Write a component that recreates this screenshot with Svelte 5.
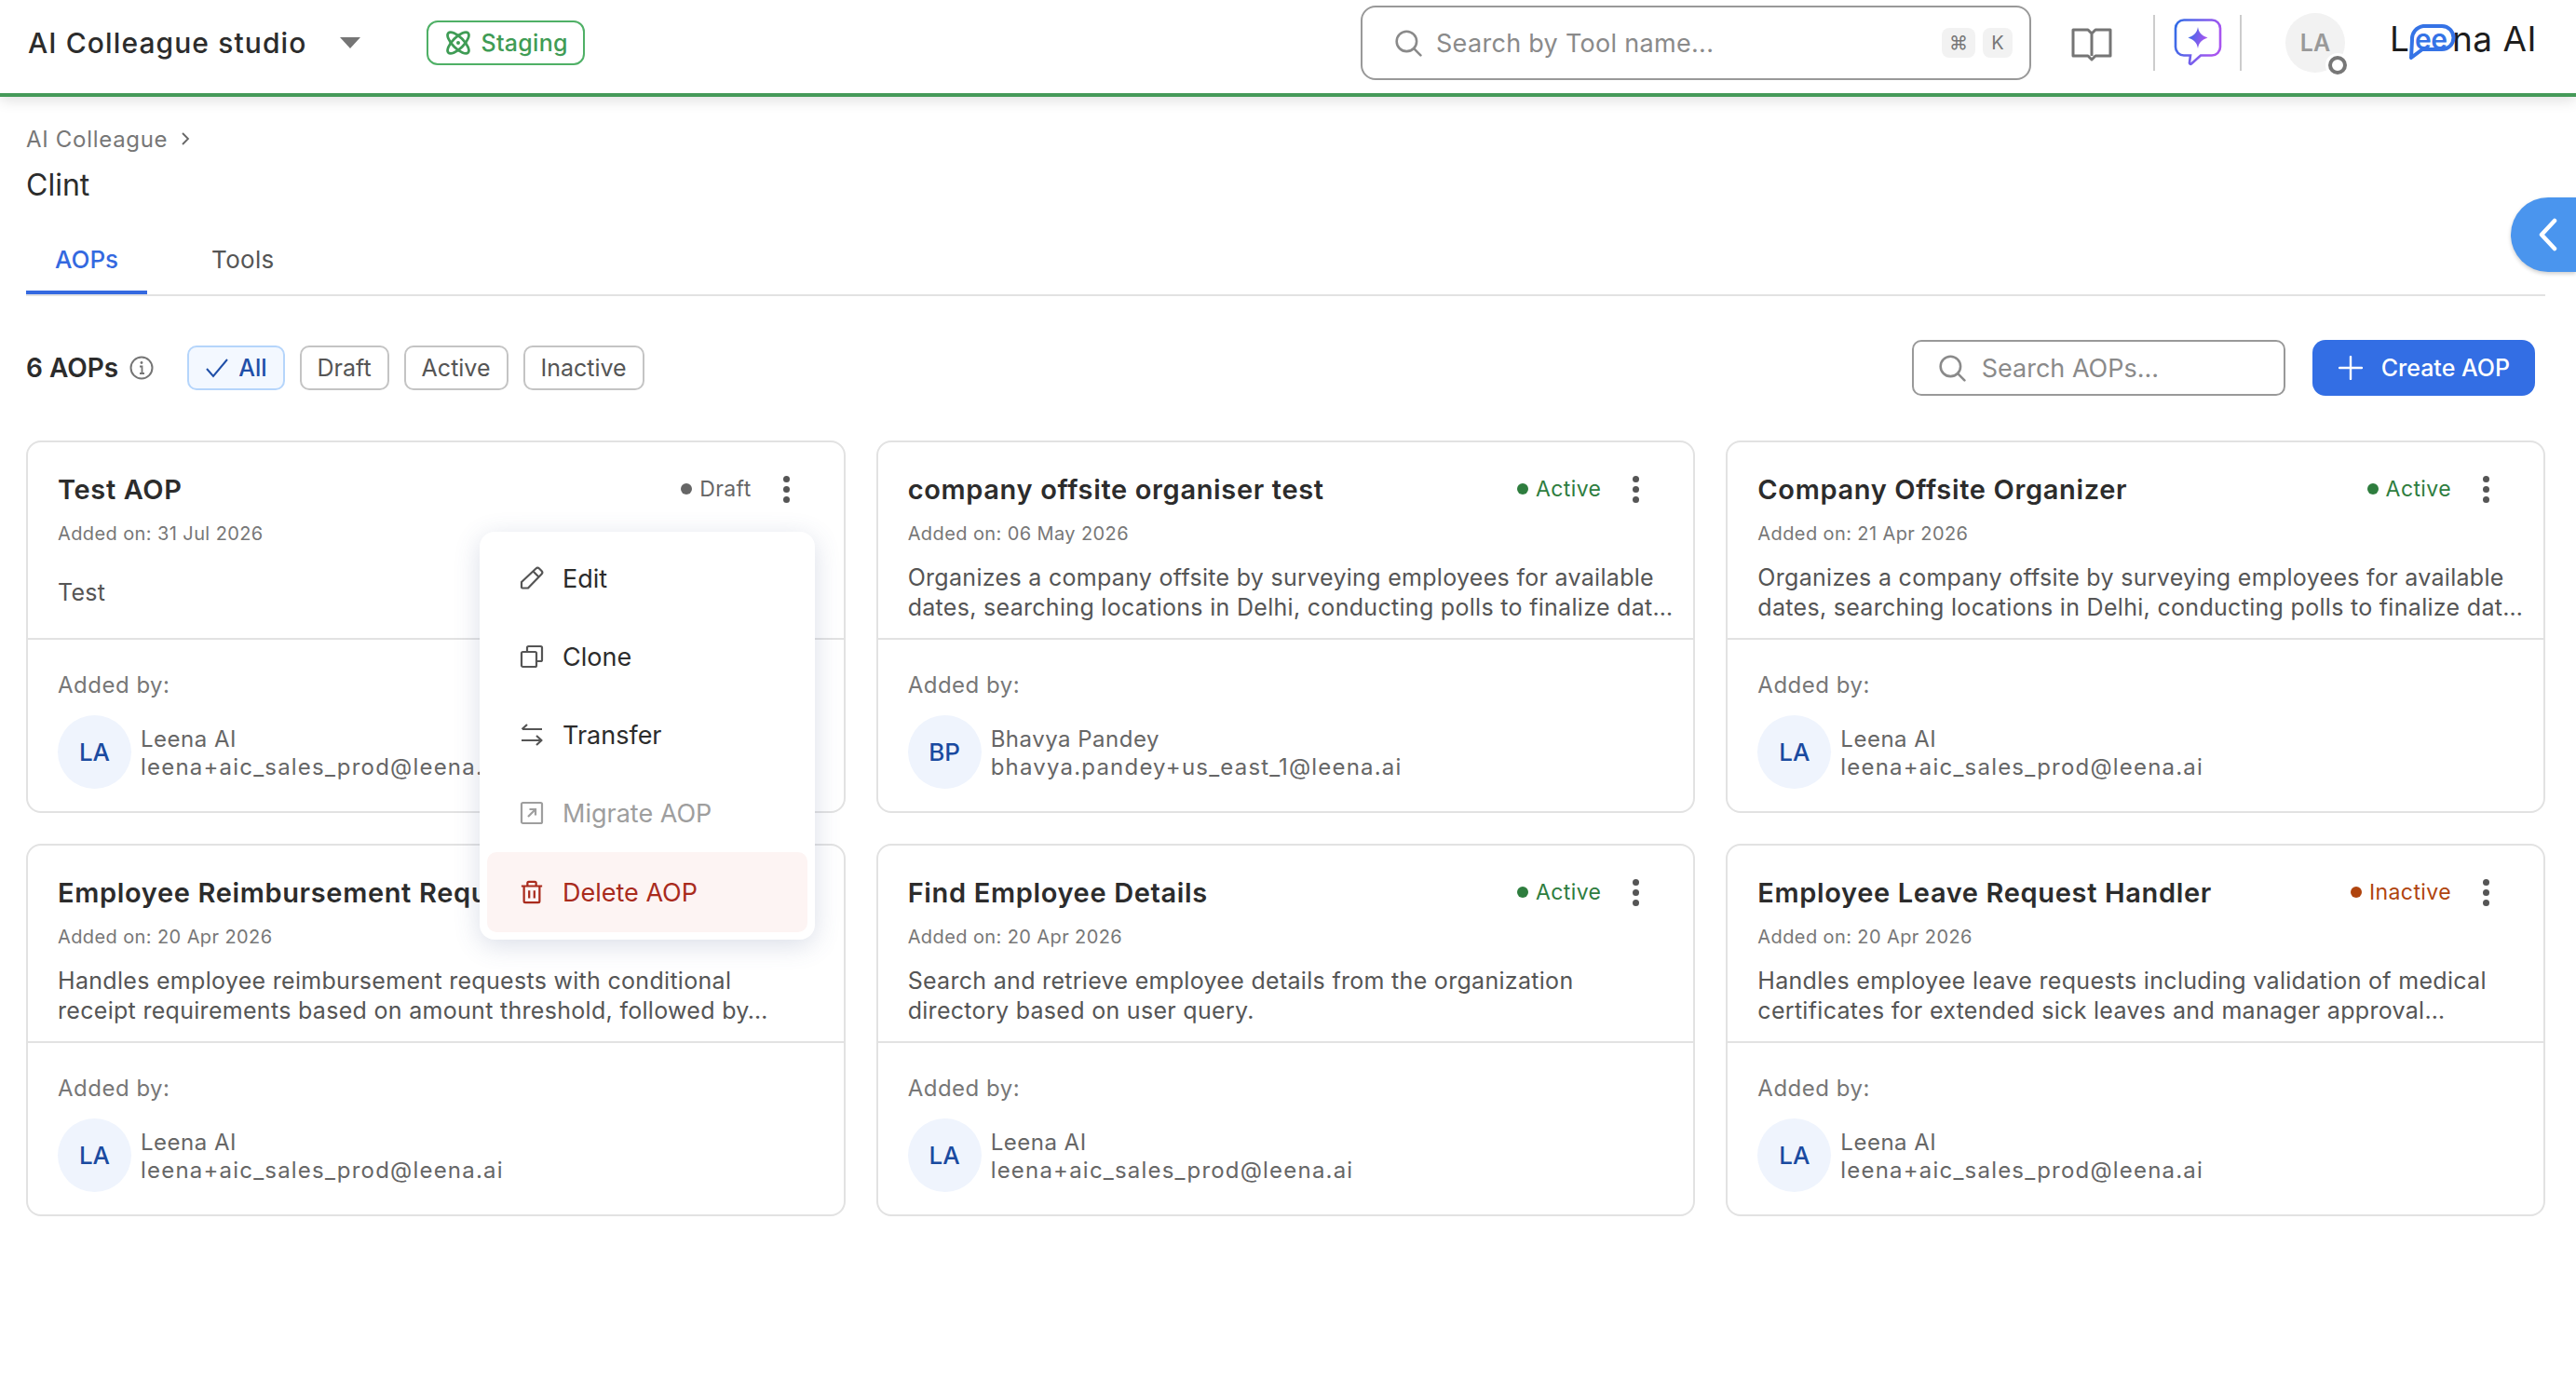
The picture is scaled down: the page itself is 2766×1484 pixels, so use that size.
<script>
    const offsiteDesc = ['Organizes a company offsite by surveying employees for available', 'dates, searching locations in Delhi, conducting polls to finalize dat…'];
    const aops = [
        { title: 'Test AOP', status: 'Draft', date: '31 Jul 2026', desc: ['Test'], name: 'Leena AI', initials: 'LA', email: 'leena+aic_sales_prod@leena.ai', menu: true },
        { title: 'company offsite organiser test', status: 'Active', date: '06 May 2026', desc: offsiteDesc, name: 'Bhavya Pandey', initials: 'BP', email: 'bhavya.pandey+us_east_1@leena.ai' },
        { title: 'Company Offsite Organizer', status: 'Active', date: '21 Apr 2026', desc: offsiteDesc, name: 'Leena AI', initials: 'LA', email: 'leena+aic_sales_prod@leena.ai' },
        { title: 'Employee Reimbursement Request', status: 'Active', date: '20 Apr 2026', desc: ['Handles employee reimbursement requests with conditional', 'receipt requirements based on amount threshold, followed by…'], name: 'Leena AI', initials: 'LA', email: 'leena+aic_sales_prod@leena.ai' },
        { title: 'Find Employee Details', status: 'Active', date: '20 Apr 2026', desc: ['Search and retrieve employee details from the organization', 'directory based on user query.'], name: 'Leena AI', initials: 'LA', email: 'leena+aic_sales_prod@leena.ai' },
        { title: 'Employee Leave Request Handler', status: 'Inactive', date: '20 Apr 2026', desc: ['Handles employee leave requests including validation of medical', 'certificates for extended sick leaves and manager approval…'], name: 'Leena AI', initials: 'LA', email: 'leena+aic_sales_prod@leena.ai' }
    ];
    const filters = ['All', 'Draft', 'Active', 'Inactive'];
</script>

{#snippet searchIcon()}
    <svg class="search-icon" viewBox="0 0 28 28" fill="none" stroke="currentColor" stroke-width="2.4" stroke-linecap="round">
        <circle cx="12.5" cy="12.5" r="10" />
        <path d="M20 20 26.500 26.500" />
    </svg>
{/snippet}

<div class="page">
    <header class="topbar">
        <div class="brand">AI Colleague studio</div>
        <svg class="caret" viewBox="0 0 24 14"><path d="M1 1h22L12 13z" fill="#757575" /></svg>
        <div class="env">
            <svg viewBox="0 0 26 26" fill="none" stroke="#3f9c55" stroke-width="2.800">
                <ellipse cx="13" cy="13" rx="6" ry="15" transform="rotate(-45 13 13)" />
                <ellipse cx="13" cy="13" rx="6" ry="15" transform="rotate(45 13 13)" />
                <circle cx="13" cy="13" r="2" fill="#3f9c55" stroke="none" />
            </svg>
            Staging
        </div>

        <div class="top-right">
            <div class="tool-search">
                {@render searchIcon()}
                <span class="placeholder">Search by Tool name...</span>
                <span class="kbd kbd--cmd">⌘</span>
                <span class="kbd">K</span>
            </div>
            <svg class="book" viewBox="0 0 44 36" fill="none" stroke="#757575" stroke-width="3" stroke-linejoin="round">
                <path d="M22 6 18 2H2v28h16l4 4 4-4h16V2H26zM22 6v24" />
            </svg>
            <div class="assistant">
                <svg viewBox="0 0 52 52" fill="none">
                    <defs>
                        <linearGradient id="chatGrad" x1="0" y1="0" x2="1" y2="0.3">
                            <stop offset="0" stop-color="#2f6de6" />
                            <stop offset="1" stop-color="#a855f0" />
                        </linearGradient>
                    </defs>
                    <path d="M11 1.500h30a9 9 0 0 1 9 9v20a9 9 0 0 1-9 9H29L19 48.500c-1 .8-2.200 0-2-1.200l1-7.800H11a9 9 0 0 1-9-9v-20a9 9 0 0 1 9-9z" stroke="url(#chatGrad)" stroke-width="2.600" />
                    <path d="M26 9c1 6 3.500 9 10.500 11.500C29.500 23 27 26 26 32c-1-6-3.500-9-10.500-11.500C22.500 18 25 15 26 9z" fill="url(#chatGrad)" />
                </svg>
            </div>
            <div class="user">
                LA
                <span class="presence"></span>
            </div>
            <div class="logo">
                <span class="logo-l">L</span><span class="logo-ee">ee<svg viewBox="0 0 50 38" fill="none" stroke="#3573e6" stroke-width="4" stroke-linejoin="round"><path d="M15 2h20a12.500 12.500 0 0 1 0 25H14L2 36l1-19A14 14 0 0 1 15 2z" /></svg></span><span>na AI</span>
            </div>
        </div>
    </header>

    <button class="drawer-tab" type="button" aria-label="Open panel">
        <svg viewBox="0 0 22 36" fill="none" stroke="#fff" stroke-width="4.500" stroke-linecap="round" stroke-linejoin="round"><path d="M18 3 4 18l14 15" /></svg>
    </button>

    <main class="content">
        <div class="breadcrumb">
            AI Colleague
            <svg viewBox="0 0 10 14" fill="none" stroke="#666" stroke-width="1.800"><path d="m2 1 6 6-6 6" /></svg>
        </div>
        <h1 class="heading">Clint</h1>

        <nav class="tabs">
            <span class="tab tab--active">AOPs</span>
            <span class="tab">Tools</span>
        </nav>

        <div class="toolbar">
            <span class="count">6 AOPs</span>
            <svg class="info" viewBox="0 0 26 26" fill="none" stroke="#757575" stroke-width="2">
                <circle cx="13" cy="13" r="11.500" />
                <path d="M11 11.500h2.500V19M11 19h5" stroke-width="1.800" />
                <circle cx="13" cy="7.500" r="1.400" fill="#757575" stroke="none" />
            </svg>
            <div class="filters">
                {#each filters as filter, i}
                    <span class="chip" class:chip--on={i === 0}>
                        {#if i === 0}
                            <svg viewBox="0 0 26 22" fill="none" stroke="#1f4fa8" stroke-width="2"><path d="m2 12 7 8L24 2" /></svg>
                        {/if}
                        {filter}
                    </span>
                {/each}
            </div>
            <div class="aop-search">
                {@render searchIcon()}
                <span class="placeholder">Search AOPs...</span>
            </div>
            <button class="create" type="button">
                <svg viewBox="0 0 26 26" fill="none" stroke="#fff" stroke-width="2.400" stroke-linecap="round"><path d="M13 1v24M1 13h24" /></svg>
                Create AOP
            </button>
        </div>

        <section class="grid">
            {#each aops as aop}
                <article class="card" class:card--raised={aop.menu}>
                    <div class="card-top">
                        <div class="card-head">
                            <h2>{aop.title}</h2>
                            <span class="status status--{aop.status.toLowerCase()}">{aop.status}</span>
                            <span class="kebab"><i></i><i></i><i></i></span>
                        </div>
                        <div class="date">Added on: {aop.date}</div>
                        <div class="desc">
                            {#each aop.desc as line}
                                <div>{line}</div>
                            {/each}
                        </div>
                    </div>
                    <div class="card-bottom">
                        <div class="added">Added by:</div>
                        <div class="person">
                            <span class="avatar">{aop.initials}</span>
                            <div class="person-text">
                                <div class="person-name">{aop.name}</div>
                                <div class="person-email">{aop.email}</div>
                            </div>
                        </div>
                    </div>

                    {#if aop.menu}
                        <div class="menu">
                            <div class="menu-item">
                                <svg viewBox="0 0 26 26" fill="none" stroke="currentColor" stroke-width="2.200" stroke-linejoin="round"><path d="M17.500 2.500a2.500 2.500 0 0 1 3.500 0l2.500 2.500a2.500 2.500 0 0 1 0 3.500L9 23.500H3a1 1 0 0 1-1-1v-5.500zM14.500 5.500l6 6" /></svg>
                                Edit
                            </div>
                            <div class="menu-item">
                                <svg viewBox="0 0 26 26" fill="none" stroke="currentColor" stroke-width="2.200"><rect x="2" y="8" width="16" height="16" rx="1.500" /><path d="M8 8V3.500A1.500 1.500 0 0 1 9.500 2h13A1.500 1.500 0 0 1 24 3.500v13a1.500 1.500 0 0 1-1.500 1.500H18" /></svg>
                                Clone
                            </div>
                            <div class="menu-item">
                                <svg viewBox="0 0 26 26" fill="none" stroke="currentColor" stroke-width="2.200" stroke-linejoin="round"><path d="M24 7H3M8 2 2.500 7M2 19h21M18 14l5.500 5L18 24" /></svg>
                                Transfer
                            </div>
                            <div class="menu-item menu-item--off">
                                <svg viewBox="0 0 26 26" fill="none" stroke="currentColor" stroke-width="2.200"><rect x="2" y="2" width="22" height="22" rx="1.500" /><path d="M9 17 17 9M10.500 9H17v6.500" /></svg>
                                Migrate AOP
                            </div>
                            <div class="menu-item menu-item--danger">
                                <svg viewBox="0 0 26 28" fill="none" stroke="currentColor" stroke-width="2.400" stroke-linejoin="round"><path d="M1 7h24M8 7V3.500A1.500 1.500 0 0 1 9.500 2h7A1.500 1.500 0 0 1 18 3.500V7M4 7v17.500A1.500 1.500 0 0 0 5.500 26h15a1.500 1.500 0 0 0 1.500-1.500V7M10 12v9M16 12v9" /></svg>
                                Delete AOP
                            </div>
                        </div>
                    {/if}
                </article>
            {/each}
        </section>
    </main>
</div>

<style>
    :global(body) {
        margin: 0;
        background: #fff;
        color: #2c2c2c;
        font-family: Inter, "Open Sans", "Liberation Sans", sans-serif;
    }

    .page {
        position: relative;
        width: 2766px;
        height: 1484px;
        overflow: hidden;
    }

    .topbar {
        display: flex;
        align-items: center;
        box-sizing: content-box;
        height: 92px;
        padding: 0 0 8px 30px;
        border-bottom: 4px solid #459a59;
        box-shadow: 0 4px 14px rgba(0, 0, 0, 0.12);
    }
    .brand {
        font-size: 30px;
        font-weight: 500;
        letter-spacing: 1.100px;
    }
    .caret {
        width: 24px;
        height: 14px;
        margin-left: 35px;
    }
    .env {
        display: flex;
        align-items: center;
        gap: 11px;
        height: 48px;
        box-sizing: border-box;
        margin-left: 70px;
        padding: 0 16px 0 19px;
        border: 2px solid #4fb066;
        border-radius: 12px;
        color: #3f9c55;
        font-size: 25px;
        font-weight: 500;
        letter-spacing: 0.3px;
    }
    .env svg {
        width: 26px;
        height: 26px;
    }

    .top-right {
        display: flex;
        align-items: center;
        margin-left: auto;
        height: 92px;
    }
    .tool-search {
        display: flex;
        align-items: center;
        box-sizing: border-box;
        width: 720px;
        height: 80px;
        padding: 0 18px 0 34px;
        border: 2px solid #999;
        border-radius: 16px;
        color: #8a8a8a;
    }
    .tool-search .placeholder {
        margin-left: 15px;
        flex: 1;
        letter-spacing: 0.3px;
    }
    .search-icon {
        width: 30px;
        height: 30px;
        flex: none;
    }
    .placeholder {
        font-size: 27px;
        color: #8a8a8a;
    }
    .kbd {
        display: flex;
        align-items: center;
        justify-content: center;
        width: 32px;
        height: 32px;
        margin-left: 8px;
        border-radius: 8px;
        background: #f2f2f2;
        color: #777;
        font-size: 20px;
    }
    .kbd--cmd {
        width: 36px;
    }
    .book {
        width: 44px;
        height: 36px;
        margin: 4px 0 0 43px;
    }
    .assistant {
        display: flex;
        align-items: center;
        justify-content: center;
        box-sizing: border-box;
        width: 95px;
        height: 60px;
        margin-left: 44px;
        border-left: 2px solid #ccc;
        border-right: 2px solid #ccc;
    }
    .assistant svg {
        width: 52px;
        height: 52px;
    }
    .user {
        position: relative;
        display: flex;
        align-items: center;
        justify-content: center;
        width: 64px;
        height: 64px;
        margin-left: 47px;
        border-radius: 50%;
        background: #f2f2f2;
        color: #999;
        font-size: 25px;
        font-weight: 600;
    }
    .presence {
        position: absolute;
        right: -2px;
        bottom: -2px;
        box-sizing: border-box;
        width: 20px;
        height: 20px;
        border: 4px solid #777;
        border-radius: 50%;
        background: #fff;
        box-shadow: 0 0 0 3px #fff;
    }
    .logo {
        display: flex;
        align-items: center;
        width: 200px;
        margin: 0 0 8px 48px;
        font-size: 37px;
        line-height: 40px;
        letter-spacing: 0.5px;
        color: #1d1d1d;
    }
    .logo-l {
        width: 21px;
    }
    .logo-ee {
        position: relative;
        width: 46px;
        padding-left: 6px;
        box-sizing: border-box;
        color: #3573e6;
        font-weight: 600;
        font-size: 30px;
        letter-spacing: -0.5px;
    }
    .logo-ee svg {
        position: absolute;
        left: 0;
        top: 4px;
        width: 50px;
        height: 38px;
    }

    .drawer-tab {
        position: absolute;
        top: 212px;
        right: 0;
        display: flex;
        align-items: center;
        width: 70px;
        height: 80px;
        padding: 0 0 0 28px;
        border: 0;
        border-radius: 40px 0 0 40px;
        background: #4a95ee;
        box-shadow: 0 2px 4px rgba(0, 0, 0, 0.2);
    }
    .drawer-tab svg {
        width: 24px;
        height: 36px;
    }

    .content {
        padding: 32px 33px 0 28px;
    }
    .breadcrumb {
        display: flex;
        align-items: center;
        gap: 14px;
        height: 26px;
        color: #777;
        font-size: 24px;
        letter-spacing: 0.7px;
    }
    .breadcrumb svg {
        width: 10px;
        height: 14px;
    }
    .heading {
        margin: 15px 0 0;
        font-size: 32px;
        line-height: 44px;
        font-weight: 400;
    }
    .tabs {
        display: flex;
        margin-top: 23px;
        border-bottom: 2px solid #e2e2e2;
    }
    .tab {
        height: 72px;
        line-height: 70px;
        box-sizing: border-box;
        padding: 0 31px;
        margin-right: 38px;
        font-size: 26px;
        letter-spacing: 0.3px;
        color: #555;
    }
    .tab--active {
        margin-bottom: -2px;
        border-bottom: 4px solid #3469e0;
        color: #3469e0;
        font-weight: 500;
        letter-spacing: 0;
    }

    .toolbar {
        display: flex;
        align-items: center;
        height: 60px;
        margin-top: 47px;
        padding-right: 11px;
    }
    .count {
        font-size: 28px;
        font-weight: 600;
    }
    .info {
        width: 26px;
        height: 26px;
        margin-left: 12px;
    }
    .filters {
        display: flex;
        gap: 16px;
        margin-left: 36px;
    }
    .chip {
        display: flex;
        align-items: center;
        gap: 10px;
        box-sizing: border-box;
        height: 48px;
        padding: 0 17px;
        border: 2px solid #c4c4c4;
        border-radius: 10px;
        font-size: 25px;
        color: #555;
    }
    .chip svg {
        width: 26px;
        height: 22px;
    }
    .chip--on {
        border-color: #b5d5fb;
        background: #f3f8ff;
        color: #1f4fa8;
        font-weight: 500;
    }
    .aop-search {
        display: flex;
        align-items: center;
        gap: 17px;
        box-sizing: border-box;
        width: 401px;
        height: 60px;
        margin-left: auto;
        padding: 0 26px;
        border: 2px solid #999;
        border-radius: 10px;
        color: #8a8a8a;
    }
    .create {
        display: flex;
        align-items: center;
        gap: 20px;
        height: 60px;
        margin-left: 29px;
        padding: 0 27px 0 28px;
        border: 0;
        border-radius: 14px;
        background: #336ee4;
        color: #fff;
        font: 500 25px Inter, sans-serif;
    }
    .create svg {
        width: 26px;
        height: 26px;
    }

    .grid {
        display: grid;
        grid-template-columns: repeat(3, minmax(0, 1fr));
        gap: 33px;
        margin-top: 48px;
    }
    .card {
        position: relative;
        box-sizing: border-box;
        height: 400px;
        border: 2px solid #e2e2e2;
        border-radius: 16px;
    }
    .card--raised {
        z-index: 2;
    }
    .card-top {
        box-sizing: border-box;
        height: 212px;
        padding: 32px 32px 0;
        border-bottom: 2px solid #e2e2e2;
    }
    .card-head {
        display: flex;
        align-items: center;
        height: 36px;
    }
    .card-head h2 {
        flex: 1;
        margin: 0;
        overflow: hidden;
        white-space: nowrap;
        font-size: 29px;
        font-weight: 600;
        letter-spacing: 0.65px;
    }
    .status {
        display: flex;
        align-items: center;
        gap: 8px;
        margin-left: 20px;
        font-size: 23px;
        letter-spacing: 0.4px;
    }
    .status::before {
        content: '';
        width: 12px;
        height: 12px;
        border-radius: 50%;
        background: currentColor;
    }
    .status--draft {
        color: #666;
    }
    .status--active {
        color: #2e7d3e;
    }
    .status--inactive {
        color: #b0440e;
    }
    .kebab {
        display: flex;
        flex-direction: column;
        gap: 4px;
        margin: 0 26px 0 34px;
    }
    .kebab i {
        width: 7px;
        height: 7px;
        border-radius: 50%;
        background: #555;
    }
    .date {
        margin-top: 16px;
        font-size: 20px;
        line-height: 28px;
        letter-spacing: 0.4px;
        color: #777;
    }
    .desc {
        display: flex;
        flex-direction: column;
        justify-content: center;
        height: 64px;
        margin-top: 17px;
        font-size: 25px;
        line-height: 32px;
        letter-spacing: 0.3px;
        color: #555;
        white-space: nowrap;
    }
    .card-bottom {
        padding: 34px 32px 0;
    }
    .added {
        font-size: 24px;
        line-height: 30px;
        letter-spacing: 0.5px;
        color: #777;
    }
    .person {
        display: flex;
        align-items: center;
        gap: 10px;
        margin-top: 17px;
    }
    .avatar {
        display: flex;
        align-items: center;
        justify-content: center;
        width: 79px;
        height: 79px;
        flex: none;
        border-radius: 50%;
        background: #eff4fd;
        color: #1a4aa0;
        font-size: 26px;
        font-weight: 500;
    }
    .person-text {
        padding-top: 2px;
        font-size: 24px;
        line-height: 30px;
        color: #666;
        white-space: nowrap;
    }
    .person-name {
        letter-spacing: 0.5px;
    }
    .person-email {
        letter-spacing: 1.200px;
    }

    .menu {
        position: absolute;
        top: 96px;
        left: 485px;
        box-sizing: border-box;
        width: 360px;
        height: 438px;
        padding: 8px;
        border-radius: 16px;
        background: #fff;
        box-shadow: 0 6px 28px rgba(70, 90, 140, 0.2);
    }
    .menu-item {
        display: flex;
        align-items: center;
        gap: 20px;
        height: 84px;
        padding-left: 35px;
        font-size: 27px;
        color: #2c2c2c;
    }
    .menu-item svg {
        width: 26px;
        height: 26px;
        color: #555;
    }
    .menu-item--off {
        color: #9e9e9e;
    }
    .menu-item--off svg {
        color: #9e9e9e;
    }
    .menu-item--danger {
        height: 86px;
        border-radius: 10px;
        background: #fdf4f3;
        color: #a92b1d;
    }
    .menu-item--danger svg {
        color: #a92b1d;
    }
</style>
